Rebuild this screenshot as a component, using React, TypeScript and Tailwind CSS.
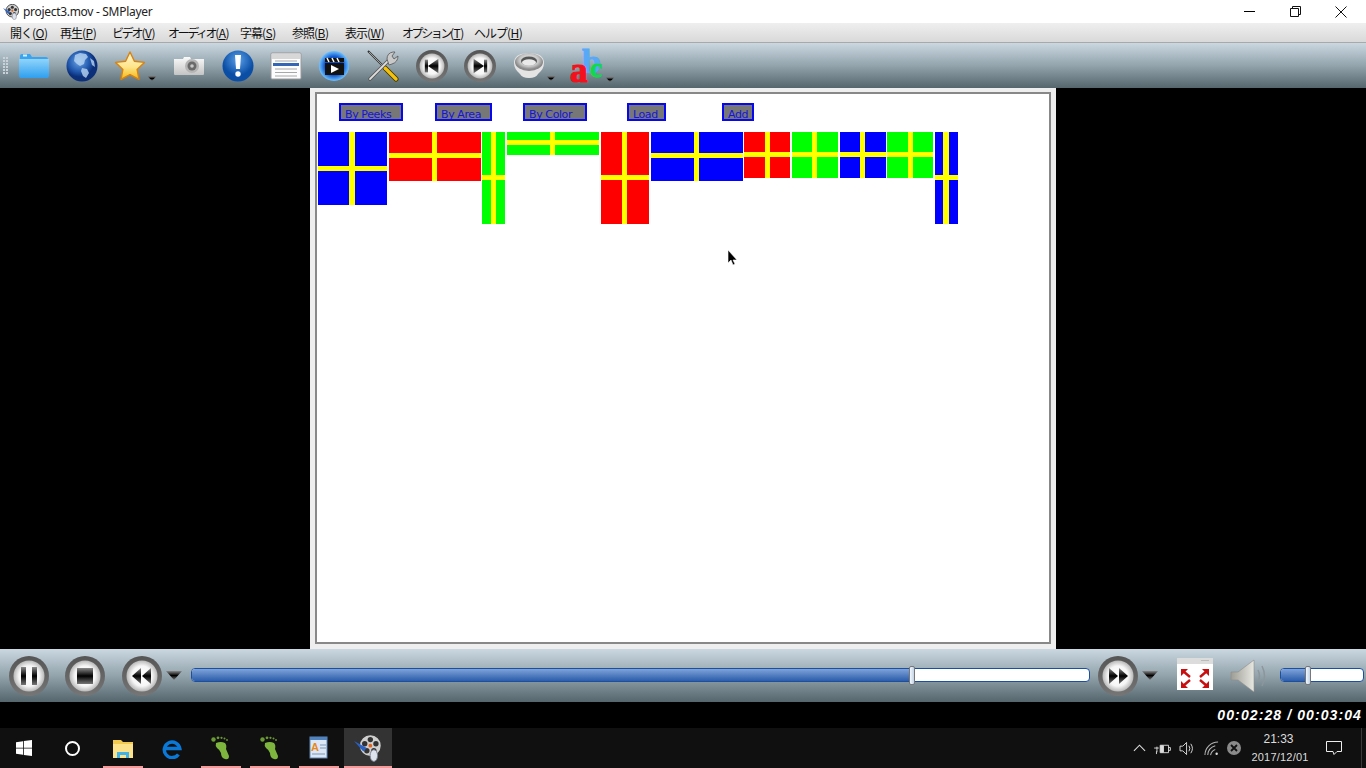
import React from 'react';

const menus = [
  { label: '開く', key: 'O', cls: 'w-[50px]', track: 'tracking-[-1px]' },
  { label: '再生', key: 'P', cls: 'w-[52px]', track: 'tracking-[-1px]' },
  { label: 'ビデオ', key: 'V', cls: 'w-[56px]', track: 'tracking-[-2.200px]' },
  { label: 'オーディオ', key: 'A', cls: 'w-[72px]', track: 'tracking-[-2.400px]' },
  { label: '字幕', key: 'S', cls: 'w-[52px]', track: 'tracking-[-1px]' },
  { label: '参照', key: 'B', cls: 'w-[53px]', track: 'tracking-[-1px]' },
  { label: '表示', key: 'W', cls: 'w-[57px]', track: 'tracking-[-1px]' },
  { label: 'オプション', key: 'T', cls: 'w-[72px]', track: 'tracking-[-2.400px]' },
  { label: 'ヘルプ', key: 'H', cls: 'w-[60px]', track: 'tracking-[-1px]' },
];

const buttons = [
  { label: 'By Peeks', cls: 'w-[64px]' },
  { label: 'By Area', cls: 'w-[57px] ml-[32px]' },
  { label: 'By Color', cls: 'w-[64px] ml-[31px]' },
  { label: 'Load', cls: 'w-[39px] ml-[40px]' },
  { label: 'Add', cls: 'w-[32px] ml-[56px]' },
];

// 旗のサイズと十字の位置
const flags = [
  { box: 'w-[69px] h-[73px] bg-[#0000ff]', grid: 'grid-cols-[31px_6px_1fr] grid-rows-[34px_5px_1fr]' },
  { box: 'w-[92px] h-[49px] bg-[#ff0000] ml-[2px]', grid: 'grid-cols-[43px_5px_1fr] grid-rows-[21px_5px_1fr]' },
  { box: 'w-[23px] h-[92px] bg-[#00ff00] ml-[1px]', grid: 'grid-cols-[9px_5px_1fr] grid-rows-[43px_5px_1fr]' },
  { box: 'w-[92px] h-[23px] bg-[#00ff00] ml-[2px]', grid: 'grid-cols-[43px_5px_1fr] grid-rows-[8px_5px_1fr]' },
  { box: 'w-[48px] h-[92px] bg-[#ff0000] ml-[2px]', grid: 'grid-cols-[21px_5px_1fr] grid-rows-[43px_5px_1fr]' },
  { box: 'w-[92px] h-[49px] bg-[#0000ff] ml-[2px]', grid: 'grid-cols-[43px_5px_1fr] grid-rows-[21px_5px_1fr]' },
  { box: 'w-[46px] h-[46px] bg-[#ff0000] ml-[1px]', grid: 'grid-cols-[21px_5px_1fr] grid-rows-[20px_5px_1fr]' },
  { box: 'w-[46px] h-[46px] bg-[#00ff00] ml-[2px]', grid: 'grid-cols-[20px_5px_1fr] grid-rows-[20px_5px_1fr]' },
  { box: 'w-[46px] h-[46px] bg-[#0000ff] ml-[2px]', grid: 'grid-cols-[20px_5px_1fr] grid-rows-[20px_5px_1fr]' },
  { box: 'w-[46px] h-[46px] bg-[#00ff00] ml-[1px]', grid: 'grid-cols-[21px_5px_1fr] grid-rows-[20px_5px_1fr]' },
  { box: 'w-[23px] h-[92px] bg-[#0000ff] ml-[2px]', grid: 'grid-cols-[8px_6px_1fr] grid-rows-[43px_5px_1fr]' },
];

const Flag: React.FC<{ box: string; grid: string }> = ({ box, grid }) => (
  <div className={`${box} ${grid} grid shrink-0`}>
    <div className="col-start-2 row-start-1 row-span-3 bg-[#ffff00]" />
    <div className="col-start-1 col-span-3 row-start-2 bg-[#ffff00]" />
  </div>
);

const Defs = () => (
  <svg className="absolute w-0 h-0">
    <defs>
      <linearGradient id="ring" x1="0" y1="0" x2="0" y2="1"><stop offset="0" stopColor="#555555" /><stop offset="1" stopColor="#767676" /></linearGradient>
      <radialGradient id="face"><stop offset="0" stopColor="#ffffff" /><stop offset="0.65" stopColor="#f6f6f6" /><stop offset="1" stopColor="#b8b8b8" /></radialGradient>
      <linearGradient id="glyph" x1="0" y1="0" x2="0" y2="1"><stop offset="0" stopColor="#8a8a8a" /><stop offset="0.5" stopColor="#000000" /><stop offset="1" stopColor="#777777" /></linearGradient>
      <linearGradient id="folder" x1="0" y1="0" x2="0" y2="1"><stop offset="0" stopColor="#8fd4fb" /><stop offset="1" stopColor="#2f9fee" /></linearGradient>
      <radialGradient id="globe" cx="0.4" cy="0.35"><stop offset="0" stopColor="#6ea6e6" /><stop offset="0.7" stopColor="#1f55ab" /><stop offset="1" stopColor="#0b2f78" /></radialGradient>
      <linearGradient id="star" x1="0" y1="0" x2="0" y2="1"><stop offset="0" stopColor="#fff7d8" /><stop offset="0.55" stopColor="#fde58a" /><stop offset="1" stopColor="#f5b70f" /></linearGradient>
      <linearGradient id="cam" x1="0" y1="0" x2="0" y2="1"><stop offset="0" stopColor="#fafafa" /><stop offset="1" stopColor="#c4c4c4" /></linearGradient>
      <radialGradient id="info" cx="0.5" cy="0.3"><stop offset="0" stopColor="#5aa0e8" /><stop offset="1" stopColor="#0a4ea6" /></radialGradient>
      <radialGradient id="clap" cx="0.5" cy="0.5"><stop offset="0.6" stopColor="#0b4fc9" /><stop offset="1" stopColor="#6fc3ff" /></radialGradient>
      <radialGradient id="cone" cx="0.5" cy="0.4"><stop offset="0" stopColor="#f4f4f4" /><stop offset="0.7" stopColor="#c4c4c4" /><stop offset="1" stopColor="#8a8a8a" /></radialGradient>
      <linearGradient id="mute" x1="0" y1="0" x2="1" y2="0"><stop offset="0" stopColor="#9d9d96" /><stop offset="1" stopColor="#e8e8e2" /></linearGradient>
    </defs>
  </svg>
);

const Round: React.FC<{ cls: string; children: React.ReactNode }> = ({ cls, children }) => (
  <svg viewBox="0 0 40 40" className={`${cls} shrink-0`}>
    <circle cx="20" cy="20" r="20" fill="url(#ring)" />
    <circle cx="20" cy="20" r="15.500" fill="url(#face)" />
    {children}
  </svg>
);

const Arrow: React.FC<{ cls: string }> = ({ cls }) => (
  <svg viewBox="0 0 16 9" className={cls}><path d="M0 0h16L8 9z" fill="url(#glyph)" /></svg>
);

const FolderIcon = () => (
  <svg viewBox="0 0 32 32" className="w-8 h-8 shrink-0">
    <path d="M2 6q0-2 2-2h8l2 3h14q2 0 2 2v18q0 1-2 1H3q-1 0-1-1z" fill="#3ba4ef" />
    <path d="M1 9h30v17q0 2-2 2H3q-2 0-2-2z" fill="url(#folder)" />
    <rect x="5" y="4.500" width="4" height="2" fill="#d7f0ff" />
  </svg>
);

const GlobeIcon = () => (
  <svg viewBox="0 0 32 32" className="w-8 h-8 shrink-0">
    <circle cx="16" cy="16" r="15.500" fill="url(#globe)" />
    <path d="M9 5l5-2 6 1 2 3-3 3-1 4-4 2-3-2-3-3zM16 18l5 1 2 4-3 5-3-2-2-5zM24 8l4 3 1 6-3-2z" fill="#b9d6f2" opacity="0.8" />
  </svg>
);

const StarIcon = () => (
  <svg viewBox="0 0 32 32" className="w-8 h-8 shrink-0">
    <path d="M16 2l4.400 9.200 10 1.200-7.300 7 1.900 10L16 24.600 7 29.400l1.900-10-7.300-7 10-1.200z" fill="url(#star)" stroke="#d9820e" strokeWidth="1.400" strokeLinejoin="round" />
  </svg>
);

const CameraIcon = () => (
  <svg viewBox="0 0 32 32" className="w-8 h-8 shrink-0">
    <path d="M1 9h9l1-2h6l1 2h13v15q0 1-1 1H2q-1 0-1-1z" fill="url(#cam)" />
    <circle cx="19" cy="16" r="7" fill="#b5b5b5" />
    <circle cx="19" cy="16" r="4.500" fill="#6a6a6a" />
    <circle cx="19" cy="16" r="1.800" fill="#c8c8c8" />
  </svg>
);

const InfoIcon = () => (
  <svg viewBox="0 0 32 32" className="w-8 h-8 shrink-0">
    <circle cx="16" cy="16" r="15.500" fill="url(#info)" />
    <path d="M13 5h6l-1 14h-4z" fill="#fff" />
    <circle cx="16" cy="24" r="2.700" fill="#fff" />
  </svg>
);

const ListIcon = () => (
  <svg viewBox="0 0 32 32" className="w-8 h-8 shrink-0">
    <rect x="1" y="3" width="30" height="26" rx="1" fill="#fdfdfd" stroke="#9a9a9a" />
    <rect x="2" y="4" width="28" height="5" fill="#d7d7d7" />
    <rect x="3" y="13" width="26" height="3" fill="#3667b4" />
    <path d="M5 11h22M5 19h22M5 22.500h22M5 26h22" stroke="#a8a8a8" strokeWidth="1" />
  </svg>
);

const ClapIcon = () => (
  <svg viewBox="0 0 32 32" className="w-8 h-8 shrink-0">
    <circle cx="16" cy="16" r="15" fill="url(#clap)" />
    <rect x="7" y="8" width="19" height="4" fill="#111" />
    <path d="M9 8l2 4M14 8l2 4M19 8l2 4" stroke="#fff" strokeWidth="1.500" />
    <rect x="7" y="13" width="19" height="12" fill="#111" />
    <path d="M13 15l8 4-8 4z" fill="#fff" />
  </svg>
);

const ToolsIcon = () => (
  <svg viewBox="0 0 32 32" className="w-8 h-8 shrink-0">
    <path d="M1 1l15 15" stroke="#333" strokeWidth="2" />
    <path d="M2 2l14 14" stroke="#bbb" strokeWidth="0.800" />
    <path d="M15 15l4 4" stroke="#333" strokeWidth="2.500" />
    <path d="M18 18l11 11" stroke="#3a3300" strokeWidth="5" strokeLinecap="round" />
    <path d="M18 18l11 11" stroke="#f4c20d" strokeWidth="3.400" strokeLinecap="round" />
    <path d="M3 29L22 10" stroke="#555" strokeWidth="3.600" strokeLinecap="round" />
    <path d="M3 29L22 10" stroke="#ddd" strokeWidth="1.800" strokeLinecap="round" />
    <path d="M20 9q0-6 6-7l2 0-3 4 2 3 4-3q0 6-6 8l-3 1z" fill="#c9c9c9" stroke="#555" strokeWidth="0.800" />
  </svg>
);

const ConeIcon = () => (
  <svg viewBox="0 0 32 32" className="w-8 h-8 shrink-0">
    <path d="M1 13q0-10 15-10t15 10q0 6-6 11-2 4-9 4t-9-4q-6-5-6-11z" fill="#e4e4e4" />
    <ellipse cx="16" cy="12" rx="14" ry="9" fill="url(#cone)" />
    <ellipse cx="16" cy="11" rx="8" ry="4.500" fill="#555" />
    <ellipse cx="16" cy="12.500" rx="7" ry="3.200" fill="#e9e9e9" />
  </svg>
);

const AbcIcon = () => (
  <svg viewBox="0 0 34 34" className="w-[34px] h-[34px] shrink-0 overflow-visible font-['Liberation_Serif',serif] font-bold">
    <text x="10" y="24" fontSize="34" fill="#58a8f8" stroke="#58a8f8" strokeWidth="1">b</text>
    <text x="-2" y="33" fontSize="35" fill="#f4101c" stroke="#f4101c" strokeWidth="1.200">a</text>
    <text x="18" y="28" fontSize="27" fill="#14d84c" stroke="#14d84c" strokeWidth="1">c</text>
  </svg>
);

const FootIcon = () => (
  <svg viewBox="0 0 20 24" className="w-5 h-6">
    <path d="M5 7q5-2 9 0 2 2 1 6l3 7q0 4-4 3-4-1-4-6-1-3-4-5-2-2-1-5z" fill="#7db53e" />
    <circle cx="2.500" cy="3.500" r="2.200" fill="#6a9a35" />
    <circle cx="7" cy="1.800" r="1.400" fill="#6a9a35" />
    <circle cx="10.500" cy="1.800" r="1.100" fill="#6a9a35" />
    <circle cx="13.500" cy="2.500" r="1" fill="#6a9a35" />
    <circle cx="16" cy="4" r="0.900" fill="#6a9a35" />
  </svg>
);

const ReelIcon: React.FC<{ cls: string }> = ({ cls }) => (
  <svg viewBox="0 0 24 24" className={cls}>
    <circle cx="14" cy="10" r="9.500" fill="#cfcfcf" stroke="#333" strokeWidth="1.200" />
    <circle cx="14" cy="4.800" r="2.300" fill="#333" />
    <circle cx="9.200" cy="8.400" r="2.300" fill="#333" />
    <circle cx="18.800" cy="8.400" r="2.300" fill="#333" />
    <circle cx="11" cy="14.400" r="2.300" fill="#333" />
    <circle cx="17" cy="14.400" r="2.300" fill="#333" />
    <path d="M0 6l11 6-3 3z" fill="#2a62c4" />
    <circle cx="14" cy="10" r="1.600" fill="#e0631c" />
    <ellipse cx="17" cy="18.500" rx="3.200" ry="5" fill="#dde2ec" stroke="#7a8090" strokeWidth="0.800" />
  </svg>
);

const DocIcon = () => (
  <svg viewBox="0 0 20 24" className="w-5 h-6">
    <rect x="1" y="1" width="17" height="21" fill="#dbe7f5" stroke="#5f87b8" />
    <rect x="1" y="1" width="17" height="3" fill="#4f83bf" />
    <text x="2" y="15" fontSize="11" fontWeight="700" fill="#e8891c" className="font-['Liberation_Sans',sans-serif]">A</text>
    <path d="M11 9h6M11 12h6M3 18h13" stroke="#7d97b8" />
  </svg>
);

const taskApps = [
  <svg key="f" viewBox="0 0 24 24" className="w-6 h-6">
    <path d="M2 4h8l2 2h10v16H2z" fill="#f2c94f" />
    <path d="M2 8h20v14H2z" fill="#fde28c" />
    <path d="M6 16h12v6h-3v-3H9v3H6z" fill="#3fb3ea" />
  </svg>,
  <svg key="e" viewBox="0 0 24 24" className="w-[22px] h-[22px]" fill="none" stroke="#0a78d7" strokeWidth="3.800">
    <path d="M5 12.500H20.500A8.500 8.500 0 1 0 19 19" />
  </svg>,
  <FootIcon key="g1" />,
  <FootIcon key="g2" />,
  <DocIcon key="d" />,
];

const Gradient = 'bg-gradient-to-b from-[#cbd8e2] via-[#93a4ad] to-[#56666d]';

const App: React.FC = () => {
  return (
    <div className="relative w-[1366px] h-[768px] overflow-hidden flex flex-col bg-black font-['Noto_Sans','Noto_Sans_CJK_JP',sans-serif]">
      <Defs />

      {/* タイトルバー */}
      <div className="h-[23px] bg-white flex items-center shrink-0">
        <ReelIcon cls="w-4 h-4 ml-[3px] shrink-0" />
        <span className="ml-1 text-[12px] tracking-[-0.3px] text-[#222]">project3.mov - SMPlayer</span>
        <div className="ml-auto flex pr-[2px]">
          <div className="w-[46px] h-[23px] flex items-center justify-center">
            <div className="w-[11px] h-px bg-black" />
          </div>
          <div className="w-[46px] h-[23px] flex items-center justify-center">
            <svg viewBox="0 0 11 11" className="w-[11px] h-[11px]" fill="none" stroke="#111">
              <path d="M.5 2.500h8v8h-8zM2.500 2.500v-2h8v8h-2" />
            </svg>
          </div>
          <div className="w-[46px] h-[23px] flex items-center justify-center">
            <svg viewBox="0 0 12 12" className="w-3 h-3" stroke="#111"><path d="M.5.500l11 11M11.500.500l-11 11" /></svg>
          </div>
        </div>
      </div>

      {/* メニュー */}
      <div className="h-5 shrink-0 flex items-center pl-[10px] bg-gradient-to-b from-[#efefef] to-[#d9d9d9] border-b border-[#a9a9a9] text-[12px] text-[#111] font-['Noto_Sans_CJK_JP',sans-serif]">
        {menus.map((m) => (
          <div key={m.key} className={`${m.cls} whitespace-nowrap tracking-[-0.5px]`}>
            <span className={m.track}>{m.label}</span>(<span className="underline">{m.key}</span>)
          </div>
        ))}
      </div>

      {/* ツールバー */}
      <div className={`h-[45px] shrink-0 flex items-center pl-[3px] ${Gradient}`}>
        <div className="grid grid-cols-2 gap-px">
          {Array.from({ length: 12 }).map((_, i) => (
            <div key={i} className="w-[2px] h-[2px] bg-[#c9d2d8]" />
          ))}
        </div>
        <div className="flex items-center gap-4 ml-[10px]">
          <FolderIcon />
          <GlobeIcon />
          <div className="flex items-end w-[43px]">
            <StarIcon />
            <Arrow cls="w-[10px] h-[5px] ml-px mb-[1px]" />
          </div>
          <CameraIcon />
          <div className="ml-px"><InfoIcon /></div>
          <ListIcon />
          <ClapIcon />
          <div className="ml-px"><ToolsIcon /></div>
          <div className="ml-px">
            <Round cls="w-8 h-8 block">
              <rect x="11" y="12" width="4" height="16" fill="url(#glyph)" />
              <path d="M15 20l13-9v18z" fill="url(#glyph)" />
            </Round>
          </div>
          <Round cls="w-8 h-8">
            <rect x="25" y="12" width="4" height="16" fill="url(#glyph)" />
            <path d="M25 20l-13-9v18z" fill="url(#glyph)" />
          </Round>
          <div className="flex items-end w-[43px] ml-px">
            <ConeIcon />
            <Arrow cls="w-[10px] h-[5px] ml-px mb-[1px]" />
          </div>
          <div className="flex items-end w-[43px]">
            <AbcIcon />
            <Arrow cls="w-[10px] h-[5px] mb-[1px] -ml-[1px]" />
          </div>
        </div>
      </div>

      {/* 映像エリア */}
      <div className="h-[561px] shrink-0 flex justify-center bg-black">
        <div className="w-[746px] h-full bg-[#eeeeee] pt-1 pb-[5px] px-[5px]">
          <div className="h-full border-2 border-[#888888] bg-white font-['DejaVu_Sans',sans-serif]">
            <div className="flex mt-[9px] ml-[22px]">
              {buttons.map((b) => (
                <div key={b.label} className={`${b.cls} h-[18px] border-2 border-[#0808f0] bg-[#777777] overflow-hidden pl-1 pt-[2px] text-[11px] leading-[16px] tracking-[-0.4px] text-[#1414dc] whitespace-nowrap`}>
                  {b.label}
                </div>
              ))}
            </div>
            <div className="flex items-start mt-[11px] ml-px">
              {flags.map((f, i) => (
                <Flag key={i} box={f.box} grid={f.grid} />
              ))}
            </div>
          </div>
        </div>
      </div>

      {/* 再生コントロール */}
      <div className={`h-[53px] shrink-0 flex items-center pl-[9px] pr-[2px] ${Gradient}`}>
        <Round cls="w-10 h-10">
          <rect x="12" y="11" width="5" height="18" fill="url(#glyph)" />
          <rect x="23" y="11" width="5" height="18" fill="url(#glyph)" />
        </Round>
        <div className="ml-4">
          <Round cls="w-10 h-10 block">
            <rect x="12" y="12" width="16" height="16" fill="url(#glyph)" />
          </Round>
        </div>
        <div className="ml-[17px]">
          <Round cls="w-10 h-10 block">
            <path d="M10 20l9-8v16zM20 20l9-8v16z" fill="url(#glyph)" />
          </Round>
        </div>
        <Arrow cls="w-4 h-[9px] ml-1 shrink-0" />
        <div className="relative flex-1 h-[14px] ml-[9px] mb-px rounded-[4px] border border-[#1c4f9e] bg-white overflow-visible">
          <div className="w-[720px] h-full rounded-l-[3px] bg-gradient-to-b from-[#7ea3d9] to-[#2b5da9]" />
          <div className="absolute left-[717px] -top-[3px] w-[6px] h-[19px] rounded-[2px] border border-[#777] bg-gradient-to-r from-[#f4f7fb] to-[#c3d3e8]" />
        </div>
        <div className="ml-[8px]">
          <Round cls="w-10 h-10 block">
            <path d="M30 20l-9-8v16zM20 20l-9-8v16z" fill="url(#glyph)" />
          </Round>
        </div>
        <Arrow cls="w-4 h-[9px] ml-1 shrink-0" />
        <svg viewBox="0 0 36 32" className="w-9 h-8 ml-[19px] mb-[3px] shrink-0">
          <rect width="36" height="32" fill="#ffffff" />
          <rect width="36" height="6" fill="#dcdcdc" />
          <path d="M24 2h8v1h-8z" fill="#bbb" />
          <path d="M4 11h7l-7 7zM32 11h-7l7 7zM4 30h7l-7-7zM32 30h-7l7-7z" fill="#c81010" />
          <path d="M6 13l7 6M30 13l-7 6M6 28l7-6M30 28l-7-6" stroke="#c81010" strokeWidth="2.400" />
        </svg>
        <svg viewBox="0 0 36 36" className="w-9 h-9 ml-[17px] shrink-0">
          <path d="M1 14h7L24 2v32L8 22H1z" fill="url(#mute)" stroke="#8d8d88" strokeWidth="0.600" />
          <path d="M28 12q3 6 0 12M32 8q5 10 0 20" fill="none" stroke="#8d9699" strokeWidth="1.500" />
        </svg>
        <div className="relative w-[84px] h-[14px] ml-[14px] mb-px shrink-0 rounded-[4px] border border-[#1c4f9e] bg-white">
          <div className="w-[26px] h-full rounded-l-[3px] bg-gradient-to-b from-[#7ea3d9] to-[#2b5da9]" />
          <div className="absolute left-[24px] -top-[3px] w-[6px] h-[19px] rounded-[2px] border border-[#777] bg-gradient-to-r from-[#f4f7fb] to-[#c3d3e8]" />
        </div>
      </div>

      {/* 時間表示 */}
      <div className="h-[26px] shrink-0 flex items-center justify-end pr-[4px] bg-black">
        <span className="text-[14px] font-bold italic tracking-[1.100px] text-white font-['Liberation_Sans',sans-serif] whitespace-pre">00:02:28 / 00:03:04</span>
      </div>

      {/* タスクバー */}
      <div className="h-10 shrink-0 flex bg-[#101010]">
        <div className="w-12 flex items-center justify-center">
          <svg viewBox="0 0 16 16" className="w-4 h-4" fill="#fff">
            <path d="M0 2.300l7-1v6.400H0zM7.800 1.100L16 0v7.700H7.800zM0 8.400h7v6.400l-7-1zM7.800 8.400H16V16l-8.200-1.100z" />
          </svg>
        </div>
        <div className="w-12 flex items-center justify-center">
          <div className="w-[15px] h-[15px] rounded-full border-2 border-white" />
        </div>
        <div className="flex ml-[3px] gap-px">
          {taskApps.map((icon, i) => (
            <div key={i} className="relative w-12 h-10 flex items-center justify-center">
              {icon}
              {i !== 1 && <div className="absolute bottom-0 left-1 right-1 h-[2px] bg-[#f59a9a]" />}
            </div>
          ))}
          <div className="relative w-12 h-10 flex items-center justify-center bg-[#333333]">
            <ReelIcon cls="w-7 h-7" />
            <div className="absolute bottom-0 left-0 right-0 h-[2px] bg-[#f59a9a]" />
          </div>
        </div>

        <div className="ml-auto flex items-center text-[#dddddd]">
          <svg viewBox="0 0 14 8" className="w-[13px] h-2" fill="none" stroke="#ddd" strokeWidth="1.200"><path d="M1 7l6-6 6 6" /></svg>
          <svg viewBox="0 0 18 14" className="w-[17px] h-[13px] ml-2" fill="none" stroke="#ddd">
            <path d="M6.500 3.500h9v8h-9zM15.500 6h2v3h-2M3 5v6M0 6.500h5M2.500 10v3" />
            <path d="M7 4h3v7H7z" fill="#ddd" />
          </svg>
          <svg viewBox="0 0 18 16" className="w-[17px] h-[15px] ml-2" fill="none" stroke="#ddd">
            <path d="M1 5.500h3l4-4v13l-4-4H1zM10.500 5q2 3 0 6M12.500 3q3.500 5 0 10" />
          </svg>
          <svg viewBox="0 0 16 16" className="w-[15px] h-[15px] ml-[8px]" fill="none" stroke="#ddd" strokeWidth="1.100">
            <path d="M1 15a14 14 0 0 1 14-14M4 15a11 11 0 0 1 8-10M7 15a8 8 0 0 1 5-6" opacity="0.8" />
            <circle cx="13.500" cy="13.500" r="1.300" fill="#ddd" stroke="none" />
          </svg>
          <svg viewBox="0 0 14 14" className="w-[14px] h-[14px] ml-[8px]">
            <circle cx="7" cy="7" r="7" fill="#8a8a8a" />
            <path d="M4 4l6 6M10 4l-6 6" stroke="#111" strokeWidth="1.800" />
          </svg>
          <div className="w-[60px] ml-[9px] text-center text-[12px] leading-[18px] font-['Liberation_Sans',sans-serif]">
            <div className="pr-[3px]">21:33</div>
            <div className="text-[11px] tracking-[0.2px]">2017/12/01</div>
          </div>
          <svg viewBox="0 0 16 16" className="w-4 h-4 ml-[16px]" fill="none" stroke="#eee">
            <path d="M.5 1.500h15v10h-4.500l-3 3-1-3H.5z" />
          </svg>
          <div className="w-px h-10 ml-[19px] bg-[#3a3a3a]" />
          <div className="w-[4px]" />
        </div>
      </div>

      {/* マウスカーソル */}
      <svg viewBox="0 0 10 16" className="absolute left-[727px] top-[250px] w-[10px] h-4">
        <path d="M1 0v13l3-3 2 5 2-1-2-4h4z" fill="#000" stroke="#fff" strokeWidth="0.600" />
      </svg>
    </div>
  );
};

export default App;
